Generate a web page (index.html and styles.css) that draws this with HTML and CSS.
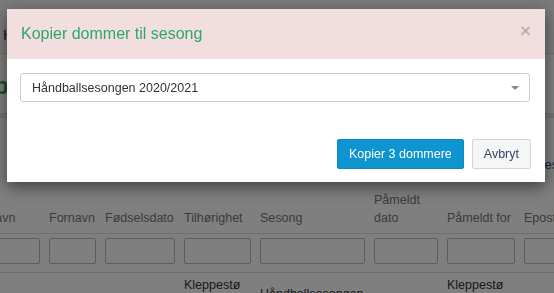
FILE: index.html
```html
<!DOCTYPE html>
<html lang="no">
<head>
<meta charset="utf-8">
<title>Kopier dommer til sesong</title>
<link rel="stylesheet" href="styles.css">
</head>
<body>
<div class="page">
  <nav class="topnav"><span class="nav-item">Hjem</span></nav>
  <h1 class="heading">pDommere</h1>
  <div class="band"></div>
  <div class="toolbar"><a class="tool-link">sesonger</a></div>
  <div class="grid">
    <div class="th">Etternavn</div>
    <div class="th">Fornavn</div>
    <div class="th">Fødselsdato</div>
    <div class="th">Tilhørighet</div>
    <div class="th">Sesong</div>
    <div class="th">Påmeldt dato</div>
    <div class="th">Påmeldt for</div>
    <div class="th">Epost</div>

    <div class="tf"><span class="filter"></span></div>
    <div class="tf"><span class="filter"></span></div>
    <div class="tf"><span class="filter"></span></div>
    <div class="tf"><span class="filter"></span></div>
    <div class="tf"><span class="filter"></span></div>
    <div class="tf"><span class="filter"></span></div>
    <div class="tf"><span class="filter"></span></div>
    <div class="tf"><span class="filter"></span></div>

    <div class="td"></div>
    <div class="td"></div>
    <div class="td"></div>
    <div class="td">Kleppestø<br>IL<br>Håndball</div>
    <div class="td">Håndballsesongen<br>2020/2021</div>
    <div class="td"></div>
    <div class="td">Kleppestø<br>IL<br>Håndball</div>
    <div class="td"></div>
  </div>
</div>

<div class="backdrop">
  <div class="modal">
    <div class="modal-header">
      <h4 class="modal-title">Kopier dommer til sesong</h4>
      <span class="close">×</span>
    </div>
    <div class="modal-body">
      <div class="select">
        <span class="select-value">Håndballsesongen 2020/2021</span>
        <span class="select-arrow"></span>
      </div>
    </div>
    <div class="modal-footer">
      <button class="btn btn-primary">Kopier 3 dommere</button>
      <button class="btn btn-default">Avbryt</button>
    </div>
  </div>
</div>
</body>
</html>
```

FILE: styles.css
```css
* { box-sizing: border-box; }

html, body {
  margin: 0;
  padding: 0;
  height: 100%;
  overflow: hidden;
}

body {
  font-family: "Liberation Sans", Arial, sans-serif;
  font-size: 12.5px;
  color: #333;
  background: #fff;
}

.page {
  width: 554px;
}

.topnav {
  height: 54px;
  background: #f5f5f5;
  border-bottom: 1px solid #ddd;
  display: flex;
  align-items: flex-start;
  padding: 27px 0 0 3px;
}

.nav-item {
  font-size: 15px;
  line-height: 15px;
  color: #333;
}

.heading {
  margin: 0;
  height: 59px;
  display: flex;
  align-items: center;
  padding: 4px 0 0 0;
  font-size: 24px;
  font-weight: bold;
  color: #2f9e44;
  margin-left: -6px;
}

.band {
  height: 5px;
  background: #e6e6e6;
}

.toolbar {
  height: 75px;
  padding: 38px 0 0 538px;
  white-space: nowrap;
  line-height: 18px;
}

.tool-link {
  color: #23527c;
  font-size: 13px;
}

.grid {
  display: grid;
  grid-template-columns: 87px 56px 79px 76px 114px 73px 77px 100px;
  margin-left: -38px;
  width: 662px;
}

.th {
  height: 41px;
  border-bottom: 1px solid #ddd;
  display: flex;
  align-items: flex-end;
  padding: 0 9px 6px 0;
  line-height: 18px;
  color: #777;
}

.tf {
  padding: 4px 9px 8px 0;
  border-bottom: 1px solid #ddd;
}

.filter {
  display: block;
  height: 26px;
  border: 1px solid #bbb;
  border-radius: 2px;
  background: #fff;
}

.td {
  padding: 3px 9px 3px 0;
  line-height: 18px;
  display: flex;
  align-items: center;
  color: #333;
}

/* Modal */
.backdrop {
  position: fixed;
  inset: 0;
  background: rgba(0, 0, 0, 0.5);
  padding: 9px 0 0 7px;
}

.modal {
  width: 538px;
  background: #fff;
  box-shadow: 0 5px 15px rgba(0, 0, 0, 0.5);
}

.modal-header {
  height: 50px;
  background: #f2dede;
  display: flex;
  align-items: center;
  justify-content: space-between;
  padding: 0 14px;
}

.modal-title {
  margin: 0;
  font-size: 16px;
  font-weight: normal;
  color: #2fa66a;
  line-height: 20px;
}

.close {
  font-size: 19px;
  font-weight: bold;
  line-height: 1;
  color: #000;
  opacity: 0.2;
  margin-top: -8px;
}

.modal-body {
  padding: 14px 15px 14px 13px;
}

.select {
  height: 29px;
  border: 1px solid #ccc;
  border-radius: 3px;
  display: flex;
  align-items: center;
  justify-content: space-between;
  padding: 0 10px 0 11px;
  color: #333;
}

.select-arrow {
  width: 0;
  height: 0;
  border-left: 4px solid transparent;
  border-right: 4px solid transparent;
  border-top: 4px solid #888;
}

.modal-footer {
  display: flex;
  justify-content: flex-end;
  gap: 8px;
  padding: 23px 14px 13px;
}

.btn {
  height: 30px;
  padding: 0 11px;
  font-family: inherit;
  font-size: 12.5px;
  border-radius: 2px;
  border: 1px solid transparent;
}

.btn-primary {
  background: #0e94cf;
  border-color: #0c88bf;
  color: #fff;
}

.btn-default {
  background: #f5f6f7;
  border-color: #d6d6d6;
  color: #34495e;
}
```
